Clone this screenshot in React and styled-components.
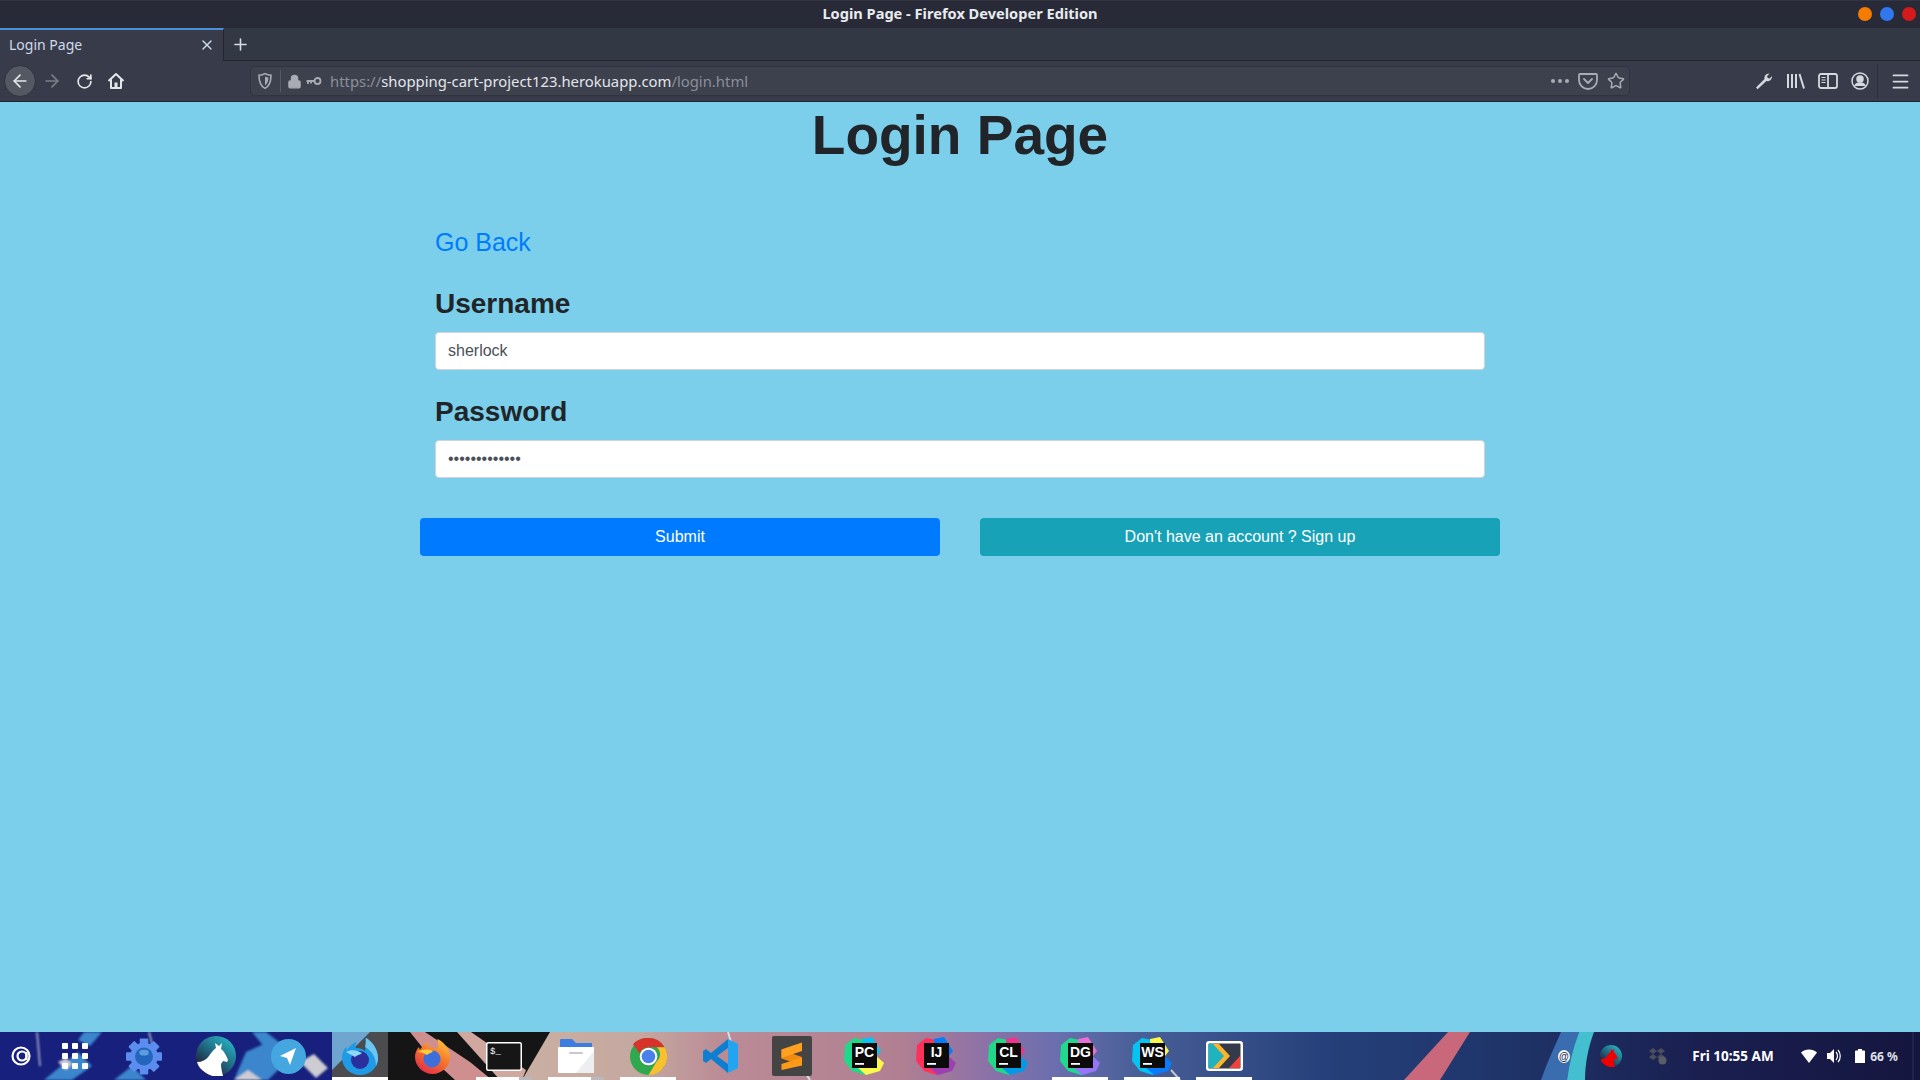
import React from "react"
import styled, { createGlobalStyle } from "styled-components"
import { ArrowLeft, ArrowRight, RotateCw, X, Plus, Lock, Star, Menu } from "lucide-react"

const GlobalStyle = createGlobalStyle`
  html, body {
    margin: 0;
    padding: 0;
    height: 100%;
    overflow: hidden;
  }
  * { box-sizing: border-box; }
`
const Screen = styled.div`
  display: flex;
  flex-direction: column;
  width: 1920px;
  height: 1080px;
  overflow: hidden;
  font-family: "Liberation Sans", Arial, sans-serif;
`
const TitleBar = styled.div`
  position: relative;
  flex: 0 0 28px;
  display: flex;
  align-items: center;
  justify-content: center;
  padding-bottom: 4px;
  background: #282b37;
  border-top: 1px solid #333642;
  color: #e9ebef;
  font: 700 14.6px "Noto Sans", sans-serif;
`
const WindowDots = styled.div`
  position: absolute;
  top: 6px;
  right: 4px;
  display: flex;
  gap: 8px;
`
const Dot = styled.span`
  width: 14px;
  height: 14px;
  border-radius: 50%;
  background: ${({ color }) => color};
`
const TabStrip = styled.div`
  flex: 0 0 33px;
  display: flex;
  align-items: stretch;
  background: #323844;
  border-bottom: 1px solid #232630;
`
const Tab = styled.div`
  width: 224px;
  display: flex;
  align-items: center;
  justify-content: space-between;
  padding: 0 8px 2px 9px;
  background: #383c4a;
  border-top: 2px solid #4a90d9;
  border-right: 1px solid #232630;
  margin-bottom: -1px;
  color: #cfdaea;
  font: 400 14px "Noto Sans", sans-serif;
`
const NewTab = styled.div`
  width: 32px;
  display: flex;
  align-items: center;
  justify-content: center;
  color: #d8dbe2;
`
const Toolbar = styled.div`
  flex: 0 0 41px;
  display: flex;
  align-items: center;
  background: #383c4a;
  border-bottom: 1px solid #1f2430;
  color: #d5d8df;
`
const NavGroup = styled.div`
  width: 250px;
  display: flex;
  align-items: center;
  padding-left: 4px;
`
const NavButton = styled.div`
  width: 32px;
  height: 32px;
  display: flex;
  align-items: center;
  justify-content: center;
  border-radius: 50%;
  background: ${({ $active }) => ($active ? "#545863" : "transparent")};
  border: ${({ $active }) => ($active ? "1px solid #2e323d" : "none")};
  color: ${({ $dim }) => ($dim ? "#7b7f89" : "#e4e6ea")};
`
const UrlBar = styled.div`
  width: 1380px;
  height: 30px;
  display: flex;
  align-items: center;
  background: #3d414e;
  border: 1px solid #30343f;
  border-radius: 5px;
  padding: 0 4px 0 6px;
  color: #a9acb4;
`
const UrlDivider = styled.span`
  width: 1px;
  height: 22px;
  margin: 0 6px 0 7px;
  background: #565a66;
`
const KeySlot = styled.span`
  display: flex;
  margin-left: 4px;
`
const UrlText = styled.div`
  flex: 1;
  margin-left: 8px;
  font: 400 14.85px "Noto Sans", sans-serif;
  color: #8b8f99;
`
const UrlHost = styled.span`
  color: #e3e5ea;
`
const UrlActions = styled.div`
  display: flex;
  align-items: center;
  gap: 9px;
`
const DotsSlot = styled.span`
  display: flex;
  margin-right: -1px;
`
const ToolIcons = styled.div`
  flex: 1;
  display: flex;
  align-items: center;
  justify-content: flex-end;
  height: 100%;
  padding-right: 4px;
`
const ToolIcon = styled.div`
  width: 32px;
  display: flex;
  align-items: center;
  justify-content: center;
`
const ToolDivider = styled.span`
  width: 1px;
  height: 34px;
  margin: 0 6px 0 1px;
  background: #2b2f39;
`
const Main = styled.main`
  flex: 1;
  background: #7bcfea;
  color: #212529;
`
const Heading = styled.h1`
  margin: 0;
  font-size: 55px;
  font-weight: 700;
  line-height: 67px;
  text-align: center;
`
const Form = styled.form`
  width: 1080px;
  margin: 55px auto 0;
`
const Fields = styled.div`
  padding: 0 15px;
`
const BackLink = styled.a`
  display: block;
  color: #007bff;
  font-size: 25px;
  line-height: 36px;
  margin-bottom: 22px;
  text-decoration: none;
`
const Group = styled.div`
  margin-bottom: 20px;
`
const Label = styled.label`
  display: block;
  padding-top: 1px;
  font-size: 28px;
  font-weight: 700;
  line-height: 41px;
  margin-bottom: 8px;
`
const Input = styled.input`
  display: block;
  width: 100%;
  height: 38px;
  padding: 6px 12px;
  background: #fff;
  border: 1px solid #ced4da;
  border-radius: 4px;
  color: #495057;
  font: 400 16px "Liberation Sans", Arial, sans-serif;
  outline: none;
`
const Actions = styled.div`
  display: grid;
  grid-template-columns: 520px 520px;
  gap: 40px;
  margin-top: 40px;
`
const Button = styled.button`
  height: 38px;
  border: 0;
  border-radius: 4px;
  background: ${({ $tone }) => $tone};
  color: #fff;
  font: 400 16px "Liberation Sans", Arial, sans-serif;
`
const Taskbar = styled.footer`
  position: relative;
  flex: 0 0 48px;
  display: flex;
  align-items: center;
  color: #fff;
`
const Wallpaper = styled.svg`
  position: absolute;
  inset: 0;
`
const Launcher = styled.div`
  position: relative;
  width: 108px;
  display: flex;
  align-items: center;
`
const LaunchIcon = styled.div`
  width: ${({ $w }) => $w}px;
  display: flex;
  justify-content: center;
`
const Slot = styled.div`
  position: relative;
  width: 72px;
  height: 48px;
  display: flex;
  align-items: center;
  justify-content: center;
  &::after {
    content: "";
    display: ${({ $open }) => ($open ? "block" : "none")};
    position: absolute;
    left: 8px;
    right: 8px;
    bottom: 0;
    height: 3px;
    background: ${({ $split }) => ($split ? "linear-gradient(90deg, #fff 43px, #b9b9bd 43px)" : "#fff")};
  }
`
const Tray = styled.div`
  position: absolute;
  inset: 0 0 0 auto;
  width: 380px;
  display: flex;
  align-items: center;
  font: 700 13.5px "Noto Sans", sans-serif;
`
const TrayItem = styled.div`
  width: ${({ $w }) => $w}px;
  display: flex;
  justify-content: center;
`
const TrayAt = styled.span`
  width: 12px;
  height: 13px;
  display: flex;
  align-items: center;
  justify-content: center;
  border-radius: 50%;
  background: #fff;
  color: #23304f;
  font: 700 10px "Liberation Sans", sans-serif;
`
const Percent = styled.span`
  color: #dfe2e8;
  font-size: 12px;
  white-space: nowrap;
`

const Home = () => (
  <svg width="18" height="18" viewBox="0 0 18 18" fill="none" stroke="#e4e6ea" strokeWidth="2" strokeLinejoin="round">
    <path d="M1.5 9 9 2l7.5 7M4 7.5V16h10V7.5" />
    <rect x="7.5" y="10.5" width="3" height="5.5" fill="#e4e6ea" stroke="none" />
  </svg>
)
const ShieldIcon = () => (
  <svg width="16" height="18" viewBox="0 0 16 18" fill="none" stroke="#a9acb4" strokeWidth="1.6">
    <path d="M2 3.2C5 3 6.500 2.400 8 1.600c1.500.8 3 1.400 6 1.600 0 6-1 10.600-6 13.200C3 13.800 2 9.200 2 3.200Z" />
    <path d="M8 4.500v9c2.500-1.800 3.400-4.600 3.500-7.900-1.500-.2-2.500-.6-3.500-1.100Z" fill="#a9acb4" stroke="none" />
  </svg>
)
const KeyIcon = () => (
  <svg width="16" height="10" viewBox="0 0 16 10" fill="none" stroke="#a9acb4" strokeWidth="1.8">
    <circle cx="11.500" cy="5" r="3" />
    <path d="M8.500 5H.5M2 5v3M5 5v2.500" />
  </svg>
)
const Dots = () => (
  <svg width="20" height="6" viewBox="0 0 20 6" fill="#a9acb4">
    <circle cx="3" cy="3" r="2" />
    <circle cx="10" cy="3" r="2" />
    <circle cx="17" cy="3" r="2" />
  </svg>
)
const PocketIcon = () => (
  <svg width="20" height="18" viewBox="0 0 20 18" fill="none" stroke="#a9acb4" strokeWidth="1.800" strokeLinecap="round" strokeLinejoin="round">
    <path d="M2 2h16a1 1 0 0 1 1 1v5a9 9 0 0 1-18 0V3a1 1 0 0 1 1-1Z" />
    <path d="m6 7 4 4 4-4" />
  </svg>
)
const WrenchIcon = () => (
  <svg width="18" height="18" viewBox="0 0 18 18" fill="#d5d8df">
    <path d="M1 15.500 9.500 7c-.6-2.500 1.500-5.700 5-5.500L12 4.200l.8 1.800 1.900.6L17 4c.3 3.500-2.800 5.900-5.600 5.100L2.600 17.200Z" />
  </svg>
)
const LibraryIcon = () => (
  <svg width="20" height="18" viewBox="0 0 20 18" fill="none" stroke="#d5d8df" strokeWidth="2">
    <path d="M2 2v14M6 2v14M10 2v14M13.500 2 18 16.500" />
  </svg>
)
const SidebarIcon = () => (
  <svg width="20" height="18" viewBox="0 0 20 18" fill="none" stroke="#d5d8df" strokeWidth="1.800">
    <rect x="1" y="2" width="18" height="14" rx="2" />
    <path d="M10 2v14" />
    <path d="M3.500 5.500h4M3.500 8h4M3.500 10.500h4" strokeWidth="1.200" />
  </svg>
)
const AccountIcon = () => (
  <svg width="18" height="18" viewBox="0 0 18 18" fill="none" stroke="#d5d8df" strokeWidth="1.500">
    <circle cx="9" cy="9" r="8" />
    <circle cx="9" cy="7" r="3" fill="#d5d8df" />
    <path d="M3.800 14c1-2.300 3-3 5.200-3s4.200.7 5.200 3" fill="#d5d8df" />
  </svg>
)

const AtIcon = () => (
  <svg width="20" height="20" viewBox="0 0 20 20" fill="none" stroke="#fff" strokeWidth="2.200">
    <circle cx="10" cy="10" r="8.500" />
    <circle cx="11" cy="10" r="4.500" />
    <path d="M15.500 6v8" />
  </svg>
)
const GridIcon = () => (
  <svg width="26" height="26" viewBox="0 0 26 26" fill="#fff">
    {[0, 10, 20].flatMap(y => [0, 10, 20].map(x => <rect key={`${x}${y}`} x={x} y={y} width="6" height="6" rx="1" />))}
  </svg>
)
const GearIcon = () => (
  <svg width="36" height="37" viewBox="0 0 38 38">
    <g fill="#5b8def">
      {[0, 45, 90, 135, 180, 225, 270, 315].map(a => (
        <rect key={a} x="14.500" y="0" width="9" height="9" rx="1" transform={`rotate(${a} 19 19)`} />
      ))}
      <circle cx="19" cy="19" r="14.500" />
    </g>
    <circle cx="19" cy="19" r="9.500" fill="#2267bd" />
    <ellipse cx="19" cy="15" rx="5" ry="3" fill="#5e9be0" />
  </svg>
)
const GoatIcon = ({ size = 40, body = "#fff" }) => (
  <svg width={size} height={size} viewBox="0 0 40 40">
    <defs>
      <linearGradient id={`goat${body.slice(1)}`} x1="0.8" y1="0" x2="0.1" y2="0.9">
        <stop offset="0" stopColor="#28b5c4" />
        <stop offset="0.55" stopColor="#1f5f78" />
        <stop offset="1" stopColor="#25102c" />
      </linearGradient>
    </defs>
    <circle cx="20" cy="20" r="20" fill={`url(#goat${body.slice(1)})`} />
    <path d="M1 26c5 0 9-2 12-6 2-3 4-6 7-8l-1-5 4 3 3-3-1 6c3 2 5 6 7 11l-1 2-4-1-2 3c0 4 1 8 2 12-6 1.500-12 .5-17-3C5 34 2 30 1 26Z" fill={body} />
  </svg>
)
const TelegramIcon = () => (
  <svg width="35" height="35" viewBox="0 0 35 35">
    <circle cx="17.500" cy="17.500" r="17.500" fill="#45a7e0" />
    <path d="M25 9 9 17l7 2 3 7Z" fill="#fff" />
  </svg>
)
const FoxDevIcon = () => (
  <svg width="36" height="37" viewBox="0 0 36 37">
    <path d="M18 37C8 37 0 29 0 20c0-5 2-9 4-11l1 3c2-4 6-7 10-8-2 3-2 5-1 6 4 0 7 1 9 3 1-3 1-8 0-13 6 3 13 11 13 20 0 10-8 17-18 17Z" fill="#1f9be6" />
    <path d="M24 0c6 3 12 11 12 20 0 3-1 6-2 8 0-9-4-15-11-19 1-3 1-6 1-9Z" fill="#6cc6f3" />
    <circle cx="18" cy="22" r="9" fill="#2b2f9e" />
    <path d="M4 14c5-3 11-2 16 1-2 2-5 2-7 4-3-2-6-3-9-5Z" fill="#8fd8f8" />
  </svg>
)
const FoxIcon = () => (
  <svg width="35" height="35" viewBox="0 0 35 35">
    <defs>
      <linearGradient id="foxBody" x1="0.8" y1="0" x2="0.2" y2="1">
        <stop offset="0" stopColor="#ffc13a" />
        <stop offset="0.5" stopColor="#f5702a" />
        <stop offset="1" stopColor="#e0284f" />
      </linearGradient>
    </defs>
    <path d="M17.500 35C8 35 0 27 0 18c0-4 1.500-7.500 4-10l1 3c2-4 5-7 9-8-1.500 2.500-1.500 4 0 5 4 0 6 1 8 3 1-3 1-7 .5-11C29 3 35 10 35 18c0 9-8 17-17.500 17Z" fill="url(#foxBody)" />
    <circle cx="17" cy="20" r="8.500" fill="#3c6fdc" />
    <path d="M3 13c4-3 10-3 15-1 -1 2-4 2-6 4-3-2-6-3-9-3Z" fill="#ffc93c" />
  </svg>
)
const TerminalIcon = () => (
  <svg width="36" height="29" viewBox="0 0 36 29">
    <rect x="0.750" y="0.750" width="34.500" height="27.500" rx="1.500" fill="#161616" stroke="#fff" strokeWidth="1.500" />
    <text x="4" y="12" fill="#fff" fontFamily="Liberation Mono, monospace" fontSize="9">$_</text>
  </svg>
)
const FilesIcon = () => (
  <svg width="36" height="34" viewBox="0 0 36 34">
    <path d="M2 1a1 1 0 0 1 1-1h11l4 4h16v6H2Z" fill="#3b7de0" />
    <rect x="0" y="8" width="36" height="26" rx="1" fill="#fff" />
    <path d="M36 12v22H18Z" fill="#eceef0" />
    <rect x="11" y="13" width="14" height="2" rx="1" fill="#c9c9c9" />
  </svg>
)
const ChromeIcon = () => (
  <svg width="37" height="37" viewBox="0 0 38 38">
    <circle cx="19" cy="19" r="19" fill="#2fa84f" />
    <path d="M19 0a19 19 0 0 1 16.500 9.500H19a9.500 9.500 0 0 0-9 6.500L3 6.500A19 19 0 0 1 19 0Z" fill="#d8322a" />
    <path d="M35.500 9.500A19 19 0 0 1 19 38l8.500-14a9.500 9.500 0 0 0 0-14.500Z" fill="#fbc02d" />
    <circle cx="19" cy="19" r="9" fill="#fff" />
    <circle cx="19" cy="19" r="7" fill="#4a80ec" />
  </svg>
)
const VscodeIcon = () => (
  <svg width="35" height="34" viewBox="0 0 35 34">
    <path fillRule="evenodd" d="M25 0 8 14l-5-4-3 2v10l3 2 5-4 17 14V25L14 17 25 9Z" fill="#0e7fd0" />
    <path d="M25 0 35 5v24l-10 5Z" fill="#22a4f0" />
  </svg>
)
const SublimeIcon = () => (
  <svg width="40" height="40" viewBox="0 0 40 40">
    <rect width="40" height="40" rx="2" fill="#444444" />
    <path d="M30 6.500 9.500 13.500V22.500L30 29.500V21L9.500 14Z" fill="#f08a10" />
    <path d="M30 6.500V15L9.500 22V13.500Z" fill="#ffa020" />
    <path d="M30 21.500V29.500L9.500 34V28Z" fill="#ff9a18" />
  </svg>
)
const IdeIcon = ({ label, colors }) => (
  <svg width="40" height="38" viewBox="0 0 40 38">
    <path d="M1 8 10 1l15 3 4 14-8 20-13-4L0 24Z" fill={colors[0]} />
    <path d="M18 2 28 0l9 14-8 10-10-6Z" fill={colors[1]} />
    <path d="M22 38l-9-8 16-14 11 10-4 8Z" fill={colors[2]} />
    <rect x="8" y="6" width="25" height="25" fill="#0b0b0b" />
    <text x="20.500" y="20" textAnchor="middle" fill="#fff" fontFamily="Liberation Sans, sans-serif" fontWeight="700" fontSize="14">{label}</text>
    <rect x="11" y="26" width="9" height="1.800" fill="#fff" />
  </svg>
)
const PlayIcon = () => (
  <svg width="37" height="30" viewBox="0 0 37 30">
    <rect x="1.250" y="1.250" width="34.500" height="27.500" rx="2" fill="#353a4a" stroke="#fff" strokeWidth="2.500" />
    <path d="M2.500 3H12l10 12-10 12H2.500Z" fill="#1fb3bf" />
    <path d="M7 3h6l11 12-11 12H7l11-12Z" fill="#fcb42a" />
    <path d="M34 15v12H23Z" fill="#f0423c" />
  </svg>
)
const WifiIcon = () => (
  <svg width="16" height="14" viewBox="0 0 16 14" fill="#fff"><path d="M0 3.500C4-.5 12-.5 16 3.500L8 14Z" /></svg>
)
const VolumeIcon = () => (
  <svg width="14" height="14" viewBox="0 0 14 14" fill="#fff">
    <path d="M0 4h3l4-4v14l-4-4H0Z" />
    <path d="M9 3c2 2 2 6 0 8M11 1c3 3 3 9 0 12" fill="none" stroke="#fff" strokeWidth="1.200" />
  </svg>
)
const BatteryIcon = () => (
  <svg width="10" height="14" viewBox="0 0 10 14" fill="#fff"><path d="M3 0h4v1.500h2a1 1 0 0 1 1 1V14H0V2.500a1 1 0 0 1 1-1h2Z" /></svg>
)
const DropboxIcon = () => (
  <svg width="18" height="18" viewBox="0 0 18 18" fill="#4c4f5a">
    <path d="m4 1 4 3-4 3-4-3ZM12 1l4 3-4 3-4-3ZM4 7l4 3-4 3-4-3ZM12 7l4 3-4 3-4-3Z" />
    <circle cx="13.500" cy="13.500" r="4" fill="#5a5d68" />
  </svg>
)

const WallpaperArt = () => (
  <Wallpaper width="1920" height="48" viewBox="0 0 1920 48">
    <defs>
      <linearGradient id="wall" x1="0" x2="1920" y1="0" y2="0" gradientUnits="userSpaceOnUse">
        <stop offset="0.27" stopColor="#c9b0a2" />
        <stop offset="0.333" stopColor="#c5a8a0" />
        <stop offset="0.375" stopColor="#bb8c96" />
        <stop offset="0.47" stopColor="#b07f92" />
        <stop offset="0.51" stopColor="#8f72a6" />
        <stop offset="0.55" stopColor="#6a6fae" />
        <stop offset="0.59" stopColor="#4a6099" />
        <stop offset="0.69" stopColor="#25407a" />
        <stop offset="0.78" stopColor="#1f356a" />
        <stop offset="0.885" stopColor="#1a1f50" />
        <stop offset="1" stopColor="#15163f" />
      </linearGradient>
      <filter id="soft"><feGaussianBlur stdDeviation="1.200" /></filter>
    </defs>
    <rect width="1920" height="48" fill="url(#wall)" />
    <rect width="332" height="48" fill="#17207c" />
    <g filter="url(#soft)">
      <g fill="#3b86cc">
        <path d="M44 48 78 20l14 14-20 14ZM84 0h18l-12 14-12-6ZM114 48l18-14 14 14ZM234 48l12-28 22-10 14 24-14 14ZM252 0h14l18 14-14 8ZM196 24l12-8 10 10-10 6Z" />
      </g>
      <g fill="#ccccd2">
        <path d="M234 48l14-10 14 10ZM300 30l14-8 14 14-12 10ZM58 30l8-4 6 6-6 6Z" />
      </g>
      <path d="M37 0 40 34" stroke="#b9bdd8" strokeWidth="1.500" />
      <path d="M149 0 153 16" stroke="#b9bdd8" strokeWidth="1.500" />
    </g>
    <rect x="332" width="58" height="48" fill="#4c4c4e" />
    <path d="M332 0h38l-38 38Z" fill="#6ea6cf" />
    <path d="M388 0h162l-28 48h-134Z" fill="#151515" />
    <path d="M410 0h15l45 30 22 18h-37l-25-23Z" fill="#cf8f8f" />
    <path d="M457 0h14l55 38-4 10h-22Z" fill="#d0a8a0" />
    <path d="M728 0 731 10M806 42 810 48" stroke="#d9dbe6" strokeWidth="2" />
    <path d="M1171 38 1180 48" stroke="#c0c8d8" strokeWidth="2" />
    <path d="M1404 48l44-48h22l-30 48Z" fill="#c9687a" />
    <path d="M1541 48c6-18 14-34 20-48h18c-6 16-10 32-12 48Z" fill="#3a6cb0" />
    <path d="M1567 48c2-16 6-32 12-48h15c-6 16-9 32-9 48Z" fill="#43bfd0" />
    <path d="M1913 0v48" stroke="#2c2f58" strokeWidth="1" />
  </Wallpaper>
)

const apps = [
  { key: "gear", icon: <GearIcon /> },
  { key: "goat", icon: <GoatIcon /> },
  { key: "telegram", icon: <TelegramIcon /> },
  { key: "foxdev", icon: <FoxDevIcon />, open: true },
  { key: "fox", icon: <FoxIcon /> },
  { key: "terminal", icon: <TerminalIcon />, open: true, split: true },
  { key: "files", icon: <FilesIcon />, open: true, split: true },
  { key: "chrome", icon: <ChromeIcon />, open: true },
  { key: "vscode", icon: <VscodeIcon /> },
  { key: "sublime", icon: <SublimeIcon /> },
  { key: "pc", icon: <IdeIcon label="PC" colors={["#21d789", "#07c3f2", "#fcf84a"]} /> },
  { key: "ij", icon: <IdeIcon label="IJ" colors={["#fe315d", "#007efc", "#9c3fb0"]} /> },
  { key: "cl", icon: <IdeIcon label="CL" colors={["#21d789", "#ed358c", "#009ae5"]} /> },
  { key: "dg", icon: <IdeIcon label="DG" colors={["#22d88f", "#e86fd8", "#9775f8"]} />, open: true },
  { key: "ws", icon: <IdeIcon label="WS" colors={["#07c3f2", "#fcf84a", "#087cfa"]} />, open: true },
  { key: "play", icon: <PlayIcon />, open: true }
]

const App = () => {
  return (
    <Screen>
      <GlobalStyle />
      <TitleBar>
        Login Page - Firefox Developer Edition
        <WindowDots>
          <Dot color="#f57c00" />
          <Dot color="#2f78ee" />
          <Dot color="#d41a1a" />
        </WindowDots>
      </TitleBar>
      <TabStrip>
        <Tab>
          Login Page
          <X size={16} />
        </Tab>
        <NewTab><Plus size={19} /></NewTab>
      </TabStrip>
      <Toolbar>
        <NavGroup>
          <NavButton $active><ArrowLeft size={20} /></NavButton>
          <NavButton $dim><ArrowRight size={20} /></NavButton>
          <NavButton><RotateCw size={17} strokeWidth={2.400} /></NavButton>
          <NavButton><Home /></NavButton>
        </NavGroup>
        <UrlBar>
          <ShieldIcon />
          <UrlDivider />
          <Lock size={15} fill="#a9acb4" />
          <KeySlot><KeyIcon /></KeySlot>
          <UrlText>
            https://<UrlHost>shopping-cart-project123.herokuapp.com</UrlHost>/login.html
          </UrlText>
          <UrlActions>
            <DotsSlot><Dots /></DotsSlot>
            <PocketIcon />
            <Star size={18} />
          </UrlActions>
        </UrlBar>
        <ToolIcons>
          <ToolIcon><WrenchIcon /></ToolIcon>
          <ToolIcon><LibraryIcon /></ToolIcon>
          <ToolIcon><SidebarIcon /></ToolIcon>
          <ToolIcon><AccountIcon /></ToolIcon>
          <ToolDivider />
          <ToolIcon><Menu size={21} /></ToolIcon>
        </ToolIcons>
      </Toolbar>
      <Main>
        <Heading>Login Page</Heading>
        <Form>
          <Fields>
            <BackLink href="#">Go Back</BackLink>
            <Group>
              <Label>Username</Label>
              <Input type="text" value="sherlock" readOnly />
            </Group>
            <Group>
              <Label>Password</Label>
              <Input type="password" value="sherlock12345" readOnly />
            </Group>
          </Fields>
          <Actions>
            <Button type="button" $tone="#007bff">Submit</Button>
            <Button type="button" $tone="#17a2b8">Don't have an account ? Sign up</Button>
          </Actions>
        </Form>
      </Main>
      <Taskbar>
        <WallpaperArt />
        <Launcher>
          <LaunchIcon $w={42}><AtIcon /></LaunchIcon>
          <LaunchIcon $w={67}><GridIcon /></LaunchIcon>
        </Launcher>
        {apps.map(app => (
          <Slot key={app.key} $open={app.open} $split={app.split}>{app.icon}</Slot>
        ))}
        <Tray>
          <TrayItem $w={48}><TrayAt>@</TrayAt></TrayItem>
          <TrayItem $w={46}><GoatIcon size={22} body="#f00000" /></TrayItem>
          <TrayItem $w={48}><DropboxIcon /></TrayItem>
          <TrayItem $w={102}>Fri 10:55 AM</TrayItem>
          <TrayItem $w={10} />
          <TrayItem $w={30}><WifiIcon /></TrayItem>
          <TrayItem $w={20}><VolumeIcon /></TrayItem>
          <TrayItem $w={32}><BatteryIcon /></TrayItem>
          <TrayItem $w={16}><Percent>66 %</Percent></TrayItem>
        </Tray>
      </Taskbar>
    </Screen>
  )
}
export default App
